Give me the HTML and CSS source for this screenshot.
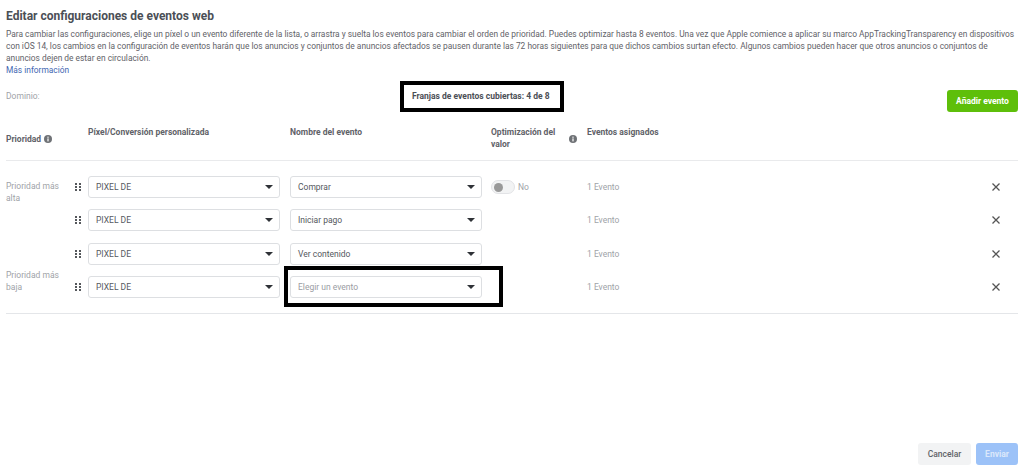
FILE: index.html
```html
<!DOCTYPE html>
<html lang="es">
<head>
<meta charset="utf-8">
<title>Editar configuraciones de eventos web</title>
<link rel="stylesheet" href="styles.css">
</head>
<body>
<main class="page">
  <h1 class="title">Editar configuraciones de eventos web</h1>
  <p class="intro">Para cambiar las configuraciones, elige un píxel o un evento diferente de la lista, o arrastra y suelta los eventos para cambiar el orden de prioridad. Puedes optimizar hasta 8 eventos. Una vez que Apple comience a aplicar su marco AppTrackingTransparency en dispositivos<br>con iOS 14, los cambios en la configuración de eventos harán que los anuncios y conjuntos de anuncios afectados se pausen durante las 72 horas siguientes para que dichos cambios surtan efecto. Algunos cambios pueden hacer que otros anuncios o conjuntos de<br>anuncios dejen de estar en circulación.<br><a class="more" href="#">Más información</a></p>

  <div class="domain-row">
    <span class="domain">Dominio:</span>
    <strong class="slots">Franjas de eventos cubiertas: 4 de 8</strong>
    <button class="add" type="button">Añadir evento</button>
  </div>

  <div class="head">
    <div class="h-priority">Prioridad <svg class="info" viewBox="0 0 8 8"><circle cx="4" cy="4" r="4" fill="#6f7276"/><rect x="3.4" y="3.4" width="1.2" height="3" fill="#fff"/><rect x="3.4" y="1.6" width="1.2" height="1.2" fill="#fff"/></svg></div>
    <div class="h-top">Píxel/Conversión personalizada</div>
    <div class="h-top">Nombre del evento</div>
    <div class="h-top h-opt"><span>Optimización del valor</span><svg class="info" viewBox="0 0 8 8"><circle cx="4" cy="4" r="4" fill="#6f7276"/><rect x="3.4" y="3.4" width="1.2" height="3" fill="#fff"/><rect x="3.4" y="1.6" width="1.2" height="1.2" fill="#fff"/></svg></div>
    <div class="h-top">Eventos asignados</div>
  </div>

  <div class="rows">
    <div class="row">
      <div class="prio prio-high">Prioridad más alta</div>
      <svg class="grip" viewBox="0 0 6 8"><g fill="#55585c"><rect width="2" height="2"/><rect x="4" width="2" height="2"/><rect y="3" width="2" height="2"/><rect x="4" y="3" width="2" height="2"/><rect y="6" width="2" height="2"/><rect x="4" y="6" width="2" height="2"/></g></svg>
      <div class="select"><span>PIXEL DE</span><i class="caret"></i></div>
      <div class="select"><span>Comprar</span><i class="caret"></i></div>
      <div class="opt"><span class="toggle"><i></i></span><span class="no">No</span></div>
      <div class="count">1 Evento</div>
      <svg class="close" viewBox="0 0 8 8"><path d="M.5.5l7 7M7.5.5l-7 7" stroke="#555" stroke-width="1.3" fill="none"/></svg>
    </div>
    <div class="row">
      <div class="prio"></div>
      <svg class="grip" viewBox="0 0 6 8"><g fill="#55585c"><rect width="2" height="2"/><rect x="4" width="2" height="2"/><rect y="3" width="2" height="2"/><rect x="4" y="3" width="2" height="2"/><rect y="6" width="2" height="2"/><rect x="4" y="6" width="2" height="2"/></g></svg>
      <div class="select"><span>PIXEL DE</span><i class="caret"></i></div>
      <div class="select"><span>Iniciar pago</span><i class="caret"></i></div>
      <div class="opt"></div>
      <div class="count">1 Evento</div>
      <svg class="close" viewBox="0 0 8 8"><path d="M.5.5l7 7M7.5.5l-7 7" stroke="#555" stroke-width="1.3" fill="none"/></svg>
    </div>
    <div class="row">
      <div class="prio"></div>
      <svg class="grip" viewBox="0 0 6 8"><g fill="#55585c"><rect width="2" height="2"/><rect x="4" width="2" height="2"/><rect y="3" width="2" height="2"/><rect x="4" y="3" width="2" height="2"/><rect y="6" width="2" height="2"/><rect x="4" y="6" width="2" height="2"/></g></svg>
      <div class="select"><span>PIXEL DE</span><i class="caret"></i></div>
      <div class="select"><span>Ver contenido</span><i class="caret"></i></div>
      <div class="opt"></div>
      <div class="count">1 Evento</div>
      <svg class="close" viewBox="0 0 8 8"><path d="M.5.5l7 7M7.5.5l-7 7" stroke="#555" stroke-width="1.3" fill="none"/></svg>
    </div>
    <div class="row">
      <div class="prio prio-low">Prioridad más baja</div>
      <svg class="grip" viewBox="0 0 6 8"><g fill="#55585c"><rect width="2" height="2"/><rect x="4" width="2" height="2"/><rect y="3" width="2" height="2"/><rect x="4" y="3" width="2" height="2"/><rect y="6" width="2" height="2"/><rect x="4" y="6" width="2" height="2"/></g></svg>
      <div class="select"><span>PIXEL DE</span><i class="caret"></i></div>
      <div class="select placeholder"><span>Elegir un evento</span><i class="caret"></i></div>
      <div class="opt"></div>
      <div class="count">1 Evento</div>
      <svg class="close" viewBox="0 0 8 8"><path d="M.5.5l7 7M7.5.5l-7 7" stroke="#555" stroke-width="1.3" fill="none"/></svg>
    </div>
  </div>

  <footer class="actions">
    <button class="cancel" type="button">Cancelar</button>
    <button class="send" type="button">Enviar</button>
  </footer>

  <div class="mark mark-slots"></div>
  <div class="mark mark-event"></div>
</main>
</body>
</html>
```

FILE: styles.css
```css
* { box-sizing: border-box; }
html, body { margin: 0; padding: 0; background: #fff; }
body { width: 1024px; height: 472px; overflow: hidden; font-family: Roboto, "Liberation Sans", sans-serif; font-size: 8.5px; color: #55585e; }
.page { position: relative; width: 1024px; height: 472px; padding: 9px 6px 0; }
.title { margin: 0; font-size: 12px; line-height: 14px; font-weight: 700; color: #4b4f56; }
.intro { margin: 5px 0 0; font-size: 8.4px; line-height: 12px; color: #5f6268; white-space: nowrap; }
.more { color: #4267b2; text-decoration: none; }

.domain-row { position: relative; display: flex; align-items: flex-start; height: 36px; margin-top: 14px; }
.domain { color: #a0a3a8; line-height: 12px; }
.slots { position: absolute; left: 406px; top: 0; line-height: 12px; font-weight: 700; color: #4b4f56; }
.add { margin-left: auto; width: 71px; height: 22px; border: 0; border-radius: 3px; background: #5ebf0a; color: #fff; font: 700 8.5px Roboto, "Liberation Sans", sans-serif; padding: 0; }

.head { display: grid; grid-template-columns: 82px 202px 201px 96px 1fr; height: 35px; border-bottom: 1px solid #e9eaec; font-weight: 700; line-height: 12px; color: #5f6268; }
.h-priority { display: flex; align-items: center; gap: 3px; height: 26px; }
.h-opt { display: flex; align-items: flex-start; gap: 8px; }
.h-opt span { width: 70px; }
.h-opt .info { margin-top: 9px; }
.info { width: 8px; height: 8px; flex: none; }

.rows { display: flex; flex-direction: column; gap: 11.2px; margin-top: 15.3px; padding-bottom: 15.5px; border-bottom: 1px solid #e4e6e9; }
.row { display: grid; grid-template-columns: 66px 16px 194px 209px 96px 1fr 26px; grid-template-rows: 22px; align-items: center; height: 22px; }
.select { display: flex; align-items: center; justify-content: space-between; height: 22px; width: 192px; padding: 0 7px; border: 1px solid #dddfe2; border-radius: 3px; background: #fff; color: #55585e; }
.row > .select + .select { margin-left: 8px; }
.placeholder { color: #9a9da3; }
.caret { width: 0; height: 0; border-left: 4px solid transparent; border-right: 4px solid transparent; border-top: 4px solid #2f3237; margin-right: -1px; }
.prio { color: #a0a3a8; line-height: 12px; width: 60px; }
.prio-high { align-self: start; margin-top: 4px; }
.prio-low { align-self: start; margin-top: -7px; }
.grip { width: 6px; height: 8px; justify-self: start; margin-left: 3px; }
.opt { display: flex; align-items: center; gap: 3px; height: 14px; color: #a0a3a8; }
.toggle { display: inline-flex; align-items: center; width: 24px; height: 14px; padding-left: 2px; border: 1px solid #e2e3e6; border-radius: 7px; background: #f2f3f4; }
.toggle i { width: 9px; height: 9px; border-radius: 50%; background: #999; }
.count { color: #a0a3a8; }
.close { width: 8px; height: 8px; justify-self: start; }

.actions { position: absolute; right: 6px; bottom: 7px; display: flex; gap: 5px; }
.actions button { height: 22px; border: 0; border-radius: 3px; padding: 0; font-family: Roboto, "Liberation Sans", sans-serif; font-size: 8.5px; }
.cancel { width: 53px; background: #f2f3f4; color: #5f6268; font-weight: 500; }
.send { width: 42px; background: #9cc2f8; color: #dbe8fb; font-weight: 700; }

.mark { position: absolute; border: 4px solid #000; }
.mark-slots { left: 400px; top: 81px; width: 164px; height: 31px; }
.mark-event { left: 284px; top: 266px; width: 219px; height: 41px; }
```
